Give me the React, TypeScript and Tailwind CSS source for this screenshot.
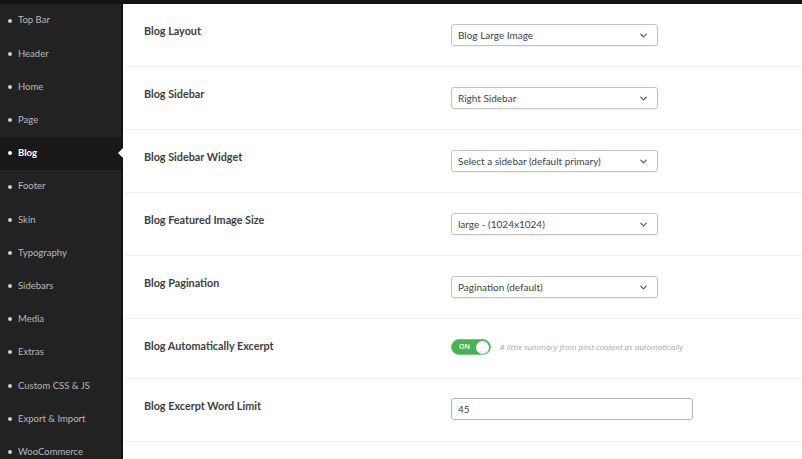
import { ChevronDown } from 'lucide-react';

const menu = [
  'Top Bar',
  'Header',
  'Home',
  'Page',
  'Blog',
  'Footer',
  'Skin',
  'Typography',
  'Sidebars',
  'Media',
  'Extras',
  'Custom CSS & JS',
  'Export & Import',
  'WooCommerce',
];

function Select({ value }: { value: string }) {
  return (
    <div className="mt-[4px] flex h-[22px] w-[207px] items-center justify-between rounded-[3px] border border-[#c4c4c4] bg-white pl-[6px] pr-[8px] text-[10px] text-[#3c434a] shadow-[0_1px_0_rgba(0,0,0,0.04)]">
      <span>{value}</span>
      <ChevronDown className="h-[11px] w-[11px] text-[#555]" strokeWidth={2.5} />
    </div>
  );
}

function Row({ label, children, short }: { label: string; children: React.ReactNode; short?: boolean }) {
  return (
    <div className={`flex items-start border-b border-[#f1f1f1] pl-[21px] pt-[16px] ${short ? 'h-[60px]' : 'h-[63px]'}`}>
      <div className="w-[307px] text-[10.8px] font-bold leading-[22px] text-[#404040]">{label}</div>
      {children}
    </div>
  );
}

export default function App() {
  return (
    <div className="flex h-[459px] w-[802px] flex-col overflow-hidden bg-white font-['Lato',sans-serif]">
      <div className="h-[4px] shrink-0 bg-[#131313]" />
      <div className="flex flex-1">
        <aside className="w-[123px] shrink-0 border-r-2 border-[#141414] bg-[#222222]">
          {menu.map((item) => {
            const active = item === 'Blog';
            return (
              <div
                key={item}
                className={`relative flex h-[33.2px] items-center gap-[6px] pl-[8px] text-[9.5px] ${active ? 'bg-[#181818] font-bold text-white' : 'text-[#b9b9b9]'}`}
              >
                <span className={`h-[4px] w-[4px] rounded-full ${active ? 'bg-white' : 'bg-[#cfcfcf]'}`} />
                {item}
                {active && (
                  <span className="absolute right-[-2px] top-1/2 h-0 w-0 -translate-y-1/2 border-y-[5px] border-r-[5px] border-y-transparent border-r-white" />
                )}
              </div>
            );
          })}
        </aside>
        <main className="flex-1">
          <Row label="Blog Layout"><Select value="Blog Large Image" /></Row>
          <Row label="Blog Sidebar"><Select value="Right Sidebar" /></Row>
          <Row label="Blog Sidebar Widget"><Select value="Select a sidebar (default primary)" /></Row>
          <Row label="Blog Featured Image Size"><Select value="large - (1024x1024)" /></Row>
          <Row label="Blog Pagination"><Select value="Pagination (default)" /></Row>
          <Row label="Blog Automatically Excerpt" short>
            <div className="mt-[4px] flex items-center gap-[9px]">
              <div className="flex h-[16px] w-[40px] items-center justify-between rounded-full border border-[#7cc47f] bg-[#46b450] pl-[7px] pr-[1px]">
                <span className="font-['Open_Sans',sans-serif] text-[7px] font-semibold text-white">ON</span>
                <span className="h-[13px] w-[13px] rounded-full bg-white" />
              </div>
              <span className="font-['Open_Sans',sans-serif] text-[8px] italic text-[#a7a7a7]">A little summary from post content as automatically</span>
            </div>
          </Row>
          <Row label="Blog Excerpt Word Limit">
            <div className="mt-[3px] flex h-[22px] w-[242px] items-center rounded-[3px] border border-[#b8b8b8] bg-white pl-[6px] text-[10px] text-[#3c434a]">
              45
            </div>
          </Row>
        </main>
      </div>
    </div>
  );
}
